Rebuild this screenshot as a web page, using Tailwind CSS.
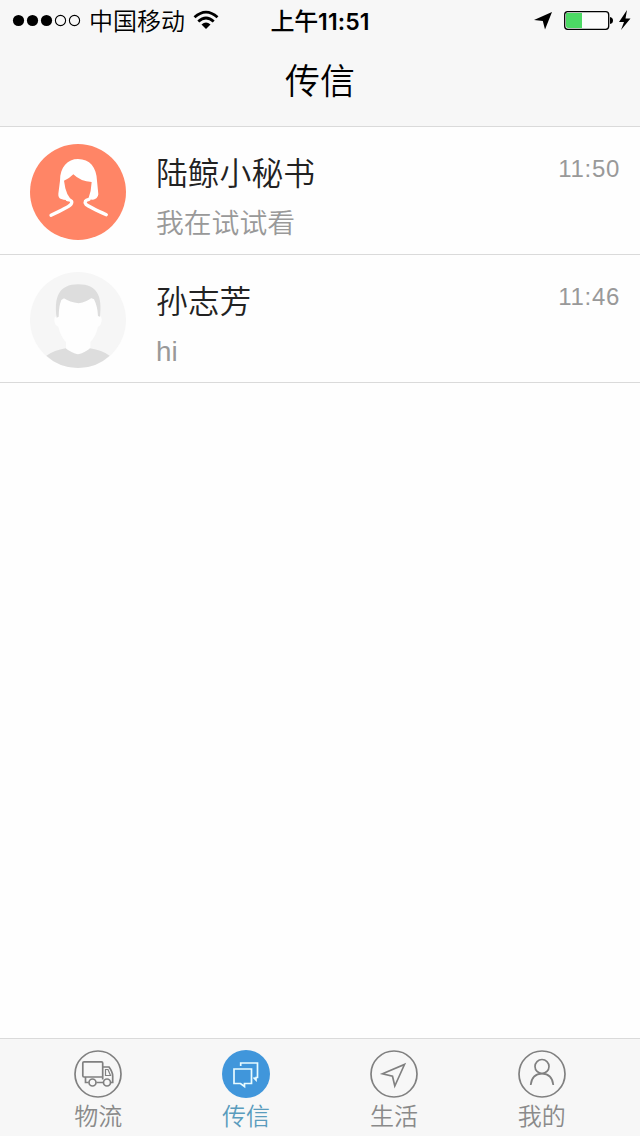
<!DOCTYPE html>
<html lang="zh-CN">
<head>
<meta charset="utf-8">
<title>传信</title>
<script src="https://cdn.jsdelivr.net/npm/@tailwindcss/browser@4"></script>
</head>
<body class="w-[640px] h-[1136px] overflow-hidden flex flex-col bg-[#fefefe] font-['Liberation_Sans','Noto_Sans_CJK_SC',sans-serif] font-[350] text-[#222]">
<header class="h-[127px] shrink-0 bg-[#f7f7f7] border-b border-[#dadada] text-black">
  <div class="h-10 grid grid-cols-[1fr_100px_1fr] items-center content-center">
    <div class="flex items-center pl-3">
      <svg class="w-[70px] h-4" viewBox="0 0 70 16"><g fill="#000"><circle cx="6.5" cy="8.5" r="5.6"/><circle cx="20.5" cy="8.5" r="5.6"/><circle cx="34.5" cy="8.5" r="5.6"/></g><g fill="none" stroke="#000" stroke-width="1.1"><circle cx="48.5" cy="8.5" r="5.1"/><circle cx="62.5" cy="8.5" r="5.1"/></g></svg>
      <span class="ml-[7px] pt-1 text-[24px] leading-9">中国移动</span>
      <svg class="ml-[8px] w-[26px] h-5" viewBox="0 0 26 20"><g fill="none" stroke="#000" stroke-width="2.800"><path d="M1.5 7.2Q13 -3 24.500 7.200"/><path d="M5.300 11.500Q13 4.500 20.700 11.500"/></g><path d="M8.500 14.500Q13 10.500 17.500 14.500L13 19Z"/></svg>
    </div>
    <div class="pt-[3px] text-[24px] leading-[37px] font-medium whitespace-nowrap text-center tracking-[-0.2px]">上午<span class="font-['Inter'] font-semibold text-[23px] tracking-[0.1px]">11:51</span></div>
    <div class="flex items-center justify-end pr-[10px]">
      <svg class="w-[100px] h-6 overflow-visible" viewBox="0 0 100 24"><path d="M4 12L22 4L15 21.500L12.800 13Z"/><rect x="34.700" y="3.700" width="44" height="17.600" rx="3" fill="#fbfbfb" stroke="#000" stroke-width="1.300"/><path d="M36 5H52V20H38Q36 20 36 18Z" fill="#4cd964"/><path d="M80 9Q83 9.500 83 12.500Q83 15.500 80 16Z"/><path d="M97 2L89 14H94L91 22L100.500 10.500H95.500Z"/></svg>
    </div>
  </div>
  <h1 class="h-[80px] pt-[3px] text-center text-[35px] leading-[78px] font-[350]">传信</h1>
</header>
<main class="flex-1">
  <div class="h-32 flex border-b border-[#dadada] pl-[30px] pr-5">
    <svg class="mt-[17px] size-24 shrink-0" viewBox="0 0 288 288"><circle cx="144" cy="144" r="144" fill="#ff8566"/><path d="M90 110C90 69 113 45 144 45C179 45 200 70 201 110L205 151Q203 166 189 167Q181 167 175 164Q184 141 185 114Q152 113 130 91Q120 102 102 110L106 133Q110 151 122 166Q106 170 94 165Q84 162 85 149Z" fill="#fff"/><path d="M112 167Q132 168 122 182Q116 189 63 214M177 166Q160 169 168 181Q178 189 229 212" fill="none" stroke="#fff" stroke-width="10" stroke-linecap="round" stroke-linejoin="round"/></svg>
    <div class="ml-[30px] flex-1 pt-[23px]">
      <div class="text-[31.800px] leading-[48px]">陆鲸小秘书</div>
      <div class="mt-0.5 text-[27.800px] leading-[48px] text-[#999]">我在试试看</div>
    </div>
    <time class="pt-[24px] text-[24px] leading-9 tracking-[0.700px] text-[#999]">11:50</time>
  </div>
  <div class="h-32 flex border-b border-[#dadada] pl-[30px] pr-5">
    <svg class="mt-[17px] size-24 shrink-0" viewBox="0 0 288 288"><circle cx="144" cy="144" r="144" fill="#f6f6f6"/><path d="M87 80H204V128Q219 134 214 150Q211 163 204 164Q198 192 181 211V232L144 248L108 232V211Q91 192 85 164Q71 157 73 140Q75 132 87 130Z" fill="#fefefe"/><path d="M80 137C72 77 85 37 145 37C203 37 217 74 210 134L204 132Q203 104 192 82L184 78Q170 90 146 94Q119 91 102 79L94 84Q86 104 86 134Z" fill="#ddd"/><path d="M49 251Q73 235 107 229Q123 243 144 247Q165 243 180 229Q216 235 239 251Q199 288 144 288Q87 287 49 251Z" fill="#ddd"/></svg>
    <div class="ml-[30px] flex-1 pt-[23px]">
      <div class="text-[31.800px] leading-[48px]">孙志芳</div>
      <div class="mt-0.5 text-[27.800px] leading-[48px] text-[#999]">hi</div>
    </div>
    <time class="pt-[24px] text-[24px] leading-9 tracking-[0.700px] text-[#999]">11:46</time>
  </div>
</main>
<nav class="h-[98px] shrink-0 bg-[#f7f7f7] border-t border-[#dadada] px-[24.4px] grid grid-cols-4 text-[24px] leading-[34px] text-[#8a8a8a]">
  <a class="flex flex-col items-center pt-[11px]">
    <svg class="size-12" viewBox="0 0 48 48" fill="none" stroke="#808080" stroke-width="1.700"><circle cx="24" cy="24" r="23"/><path d="M14.500 32.500H11.500V27M10 11.800H27.500Q28.700 11.800 28.700 13V27H10Q8.800 27 8.800 25.800V13Q8.800 11.800 10 11.800ZM28.700 17H35Q38.700 22 38.700 26V32.500H37M22.500 32.500H29M28.700 27V29.500"/><path d="M31.500 19.500H34L36.500 25.500H31.500Z" stroke-width="1.200"/><circle cx="18.500" cy="32.500" r="3.500"/><circle cx="33" cy="32.500" r="3.500"/></svg>
    <span class="mt-[2px]">物流</span>
  </a>
  <a class="flex flex-col items-center pt-[11px] text-[#5a9cbd]">
    <svg class="size-12" viewBox="0 0 48 48" fill="none" stroke="#e8fbff" stroke-width="1.700"><circle cx="24" cy="24" r="24" fill="#4096db" stroke="none"/><path d="M18.700 16V13H35.500V27.500H34V30L31.500 27.500M12 19H29.500V33.500H22.500V36.500L18.500 33.500H12Z"/></svg>
    <span class="mt-[2px]">传信</span>
  </a>
  <a class="flex flex-col items-center pt-[11px]">
    <svg class="size-12" viewBox="0 0 48 48" fill="none" stroke="#808080" stroke-width="1.700"><circle cx="24" cy="24" r="23"/><path d="M12.500 23.800L34.500 14.500L24.800 36L22.500 26.300Z"/></svg>
    <span class="mt-[2px]">生活</span>
  </a>
  <a class="flex flex-col items-center pt-[11px]">
    <svg class="size-12" viewBox="0 0 48 48" fill="none" stroke="#808080" stroke-width="1.700"><circle cx="24" cy="24" r="23"/><circle cx="24" cy="16.500" r="7"/><path d="M12.700 35C13.500 28 17.500 23.700 24 23.700S34.500 28 35.300 35"/></svg>
    <span class="mt-[2px]">我的</span>
  </a>
</nav>
</body>
</html>
